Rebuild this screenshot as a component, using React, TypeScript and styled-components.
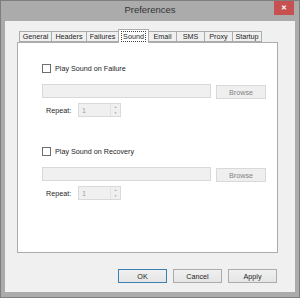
import React from 'react';
import styled, { createGlobalStyle } from 'styled-components';

const GlobalStyle = createGlobalStyle`
  html, body {
    margin: 0;
    padding: 0;
    background: #ffffff;
  }
  body {
    font-family: "Liberation Sans", Arial, sans-serif;
  }
`;

// widths are the distance between tab edges in the reference
const tabs = [
    { label: 'General', width: 32 },
    { label: 'Headers', width: 35 },
    { label: 'Failures', width: 32 },
    { label: 'Sound', width: 30 },
    { label: 'Email', width: 28 },
    { label: 'SMS', width: 28 },
    { label: 'Proxy', width: 28 },
    { label: 'Startup', width: 29 },
];

const SoundGroup = ({ label }: { label: string }) => (
    <Group>
        <CheckRow>
            <CheckBox />
            <CheckLabel>{label}</CheckLabel>
        </CheckRow>
        <PathRow>
            <PathField />
            <SmallButton disabled>Browse</SmallButton>
        </PathRow>
        <RepeatRow>
            <RepeatLabel>Repeat:</RepeatLabel>
            <Spinner>
                <SpinValue>1</SpinValue>
                <SpinArrows>
                    <Arrow>▲</Arrow>
                    <Arrow>▼</Arrow>
                </SpinArrows>
            </Spinner>
        </RepeatRow>
    </Group>
);

export default function App() {
    return (
        <>
            <GlobalStyle />
            <Window>
                <TitleBar>
                    <span />
                    <Title>Preferences</Title>
                    <CloseBtn>✕</CloseBtn>
                </TitleBar>
                <Client>
                    <TabStrip>
                        {tabs.map((t) => (
                            <Tab key={t.label} $w={t.width} $active={t.label === 'Sound'}>
                                {t.label === 'Sound' ? <Focus>{t.label}</Focus> : t.label}
                            </Tab>
                        ))}
                    </TabStrip>
                    <Panel>
                        <SoundGroup label="Play Sound on Failure" />
                        <SoundGroup label="Play Sound on Recovery" />
                    </Panel>
                    <ButtonRow>
                        <DlgButton $default>OK</DlgButton>
                        <DlgButton>Cancel</DlgButton>
                        <DlgButton>Apply</DlgButton>
                    </ButtonRow>
                </Client>
            </Window>
        </>
    );
}

const Window = styled.div`
    width: 300px;
    height: 298px;
    box-sizing: border-box;
    border: 1px solid #7e7e7e;
    background: #ababab;
    display: flex;
    flex-direction: column;
    padding: 0 4px 5px 4px;
`;

const TitleBar = styled.div`
    height: 20px;
    display: grid;
    grid-template-columns: 1fr auto 1fr;
    align-items: start;
    margin: 0 -4px;
`;

const Title = styled.div`
    font-size: 9.5px;
    color: #333333;
    line-height: 20px;
    margin-top: -1px;
`;

const CloseBtn = styled.div`
    justify-self: end;
    width: 20px;
    height: 14px;
    margin-right: 5px;
    background: #c75050;
    color: #ffffff;
    font-size: 7px;
    font-weight: bold;
    display: flex;
    align-items: center;
    justify-content: center;
`;

const Client = styled.div`
    flex: 1;
    background: #f0f0f0;
    display: flex;
    flex-direction: column;
    padding: 8px 17px 9px 12px;
    min-height: 0;
`;

const TabStrip = styled.div`
    display: flex;
    align-items: flex-end;
    height: 13px;
    padding-left: 2px;
    position: relative;
    z-index: 1;
`;

const Tab = styled.div<{ $w: number; $active?: boolean }>`
    box-sizing: border-box;
    width: ${(p) => p.$w + 1}px;
    height: ${(p) => (p.$active ? 14 : 11)}px;
    margin: ${(p) => (p.$active ? '0 0 -1px -1px' : '0 0 0 -1px')};
    border: 1px solid #acacac;
    border-bottom: ${(p) => (p.$active ? 'none' : '1px solid #acacac')};
    background: ${(p) => (p.$active ? '#ffffff' : '#f0f0f0')};
    font-size: 7.2px;
    color: #1e1e1e;
    display: flex;
    align-items: center;
    justify-content: center;
    position: relative;
    z-index: ${(p) => (p.$active ? 2 : 1)};
    &:first-child {
        margin-left: 0;
    }
`;

const Focus = styled.span`
    border: 1px dotted #444444;
    padding: 0 1px;
    line-height: 9px;
`;

const Panel = styled.div`
    height: 211px;
    box-sizing: border-box;
    background: #ffffff;
    border: 1px solid #acacac;
    padding: 20px 0 0 24px;
    display: flex;
    flex-direction: column;
    gap: 29px;
`;

const Group = styled.div`
    display: flex;
    flex-direction: column;
`;

const CheckRow = styled.div`
    display: flex;
    align-items: center;
    height: 10px;
    gap: 4px;
`;

const CheckBox = styled.div`
    width: 9px;
    height: 9px;
    box-sizing: border-box;
    border: 1px solid #6e6e6e;
    background: #ffffff;
`;

const CheckLabel = styled.span`
    font-size: 7.2px;
    color: #1e1e1e;
`;

const PathRow = styled.div`
    display: flex;
    align-items: flex-start;
    gap: 5px;
    margin-top: 11px;
`;

const PathField = styled.div`
    width: 169px;
    height: 14px;
    box-sizing: border-box;
    border: 1px solid #d9d9d9;
    background: #f0f0f0;
`;

const SmallButton = styled.button`
    width: 50px;
    height: 14px;
    margin-top: 1px;
    box-sizing: border-box;
    border: 1px solid #d9d9d9;
    background: #efefef;
    color: #838383;
    font-family: inherit;
    font-size: 7.2px;
    padding: 0;
`;

const RepeatRow = styled.div`
    display: flex;
    align-items: center;
    margin-top: 4px;
    padding-left: 4px;
`;

const RepeatLabel = styled.span`
    width: 32px;
    font-size: 7.2px;
    color: #1e1e1e;
`;

const Spinner = styled.div`
    width: 43px;
    height: 14px;
    box-sizing: border-box;
    border: 1px solid #d9d9d9;
    background: #f0f0f0;
    display: flex;
    align-items: center;
`;

const SpinValue = styled.span`
    flex: 1;
    padding-left: 3px;
    font-size: 7.2px;
    color: #a0a0a0;
`;

const SpinArrows = styled.div`
    width: 9px;
    height: 100%;
    display: flex;
    flex-direction: column;
    border-left: 1px solid #e3e3e3;
`;

const Arrow = styled.span`
    flex: 1;
    font-size: 3px;
    color: #9a9a9a;
    display: flex;
    align-items: center;
    justify-content: center;
`;

const ButtonRow = styled.div`
    display: flex;
    justify-content: flex-end;
    gap: 6px;
    margin-top: 16px;
    padding-right: 1px;
`;

const DlgButton = styled.button<{ $default?: boolean }>`
    width: 49px;
    height: 14px;
    box-sizing: border-box;
    padding: 0;
    border: 1px solid ${(p) => (p.$default ? '#3c7fb1' : '#acacac')};
    background: linear-gradient(#f0f0f0, #e5e5e5);
    font-family: inherit;
    font-size: 7.2px;
    color: #1e1e1e;
`;
